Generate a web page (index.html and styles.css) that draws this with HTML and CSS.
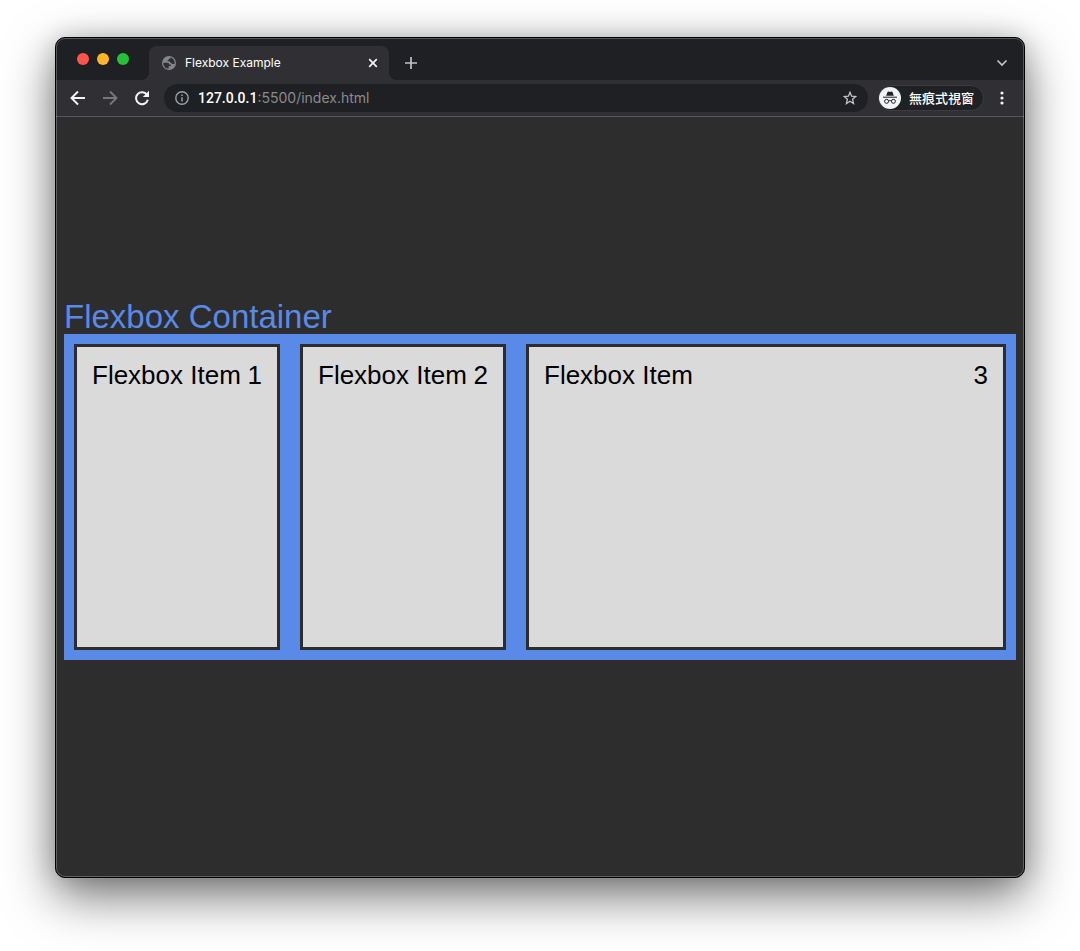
FILE: index.html
```html
<!DOCTYPE html>
<html lang="zh-Hant">
<head>
<meta charset="utf-8">
<meta name="viewport" content="width=device-width, initial-scale=1">
<title>Flexbox Example</title>
<link rel="stylesheet" href="styles.css">
</head>
<body>
<div class="window">
  <header class="tabstrip">
    <div class="lights">
      <button class="light red" aria-label="Close window"></button>
      <button class="light yellow" aria-label="Minimize window"></button>
      <button class="light green" aria-label="Zoom window"></button>
    </div>
    <div class="tab">
      <svg class="globe" width="14" height="14" viewBox="0 0 14 14" aria-hidden="true"><circle cx="7" cy="7" r="7" fill="#80868b"/><path d="M1.300 6.700h4.200c1.300 0 1.600.8 1.600 1.800h1.500c.6 0 .5 1.200 0 1.500H6.700v2.600C3.600 12.700 1.200 10 1.300 6.700zM8.300 1.500c.2 1-.5 1.400-1.200 1.500-.3 1.300-1.600.8-1.600 1.700 0 .7 1.600.4 2.300.9.700.6.500 1.600 1.500 1.600.9 0 .8.900 1.500.9h1.800C13 4.600 11.200 2 8.300 1.500z" fill="#303034"/></svg>
      <span class="tab-title">Flexbox Example</span>
      <button class="icon-button small" aria-label="Close tab"><svg width="10" height="10" viewBox="0 0 10 10"><path d="M1.200 1.200l7.600 7.600M8.800 1.200L1.200 8.800" stroke="#f1f3f4" stroke-width="1.700"/></svg></button>
    </div>
    <button class="icon-button new-tab" aria-label="New tab"><svg width="12" height="12" viewBox="0 0 12 12"><path d="M6 0v12M0 6h12" stroke="#c0c3c8" stroke-width="1.700"/></svg></button>
    <button class="icon-button search-tabs" aria-label="Search tabs"><svg width="12" height="12" viewBox="0 0 12 12"><path d="M1.500 3.500L6 8l4.500-4.500" fill="none" stroke="#c0c3c8" stroke-width="1.700"/></svg></button>
  </header>
  <nav class="toolbar">
    <button class="icon-button" aria-label="Back"><svg width="20" height="20" viewBox="0 0 20 20"><path d="M17 10H4M10 3.500L3.500 10l6.500 6.500" fill="none" stroke="#f1f3f4" stroke-width="1.900"/></svg></button>
    <button class="icon-button" aria-label="Forward"><svg width="20" height="20" viewBox="0 0 20 20"><path d="M3 10h13M10 3.500l6.500 6.500-6.500 6.500" fill="none" stroke="#77777b" stroke-width="1.900"/></svg></button>
    <button class="icon-button" aria-label="Reload"><svg width="20" height="20" viewBox="0 0 20 20"><path d="M15.200 7.200A6 6 0 1 0 15.800 11.800" fill="none" stroke="#f1f3f4" stroke-width="2"/><path d="M17 2.800V9h-6.200z" fill="#f1f3f4"/></svg></button>
    <div class="address">
      <svg width="14" height="14" viewBox="0 0 14 14" aria-hidden="true"><circle cx="7" cy="7" r="6.200" fill="none" stroke="#9aa0a6" stroke-width="1.400"/><path d="M7 6.200v4.300M7 3.500v1.500" stroke="#9aa0a6" stroke-width="1.500"/></svg>
      <span class="url"><b>127.0.0.1</b>:5500/index.html</span>
      <button class="icon-button star" aria-label="Bookmark this page"><svg width="14" height="14" viewBox="0 0 14 14"><path d="M7 1.300l1.600 3.900 4.200.3-3.200 2.800 1 4.200L7 10.200l-3.600 2.300 1-4.200L1.200 5.500l4.200-.3z" fill="none" stroke="#c0c3c8" stroke-width="1.300"/></svg></button>
    </div>
    <div class="incognito">
      <svg width="22" height="22" viewBox="0 0 22 22" aria-hidden="true"><circle cx="11" cy="11" r="11" fill="#f1f3f4"/><path d="M7.200 8.800l1.200-3.600c.2-.6.700-.8 1.200-.6l1.400.4 1.400-.4c.5-.2 1 0 1.200.6l1.200 3.600z" fill="#202124"/><path d="M4 10.200h14M9.600 14c.9-.6 1.900-.6 2.800 0" fill="none" stroke="#202124" stroke-width="1"/><circle cx="7.600" cy="14.300" r="2" fill="none" stroke="#202124"/><circle cx="14.400" cy="14.300" r="2" fill="none" stroke="#202124"/></svg>
      <span>無痕式視窗</span>
    </div>
    <button class="icon-button" aria-label="Menu"><svg width="4" height="14" viewBox="0 0 4 14"><g fill="#f1f3f4"><circle cx="2" cy="2" r="1.600"/><circle cx="2" cy="7" r="1.600"/><circle cx="2" cy="12" r="1.600"/></g></svg></button>
  </nav>
  <main class="page">
    <h1 class="title">Flexbox Container</h1>
    <div class="container">
      <div class="item"><span>Flexbox Item</span><span>1</span></div>
      <div class="item"><span>Flexbox Item</span><span>2</span></div>
      <div class="item grow"><span>Flexbox Item</span><span>3</span></div>
    </div>
  </main>
</div>
</body>
</html>
```
FILE: styles.css
```css
* {
  box-sizing: border-box;
}

body {
  display: flex;
  min-height: 100vh;
  margin: 0;
  padding: 37px 55px 73px;
  background: #fff;
  font-family: "Liberation Sans", "Noto Sans CJK TC", sans-serif;
}

.window {
  display: flex;
  flex: 1;
  flex-direction: column;
  min-width: 0;
  overflow: hidden;
  border: 1px solid #000;
  border-radius: 10px;
  background: #2d2d2d;
  box-shadow: 0 18px 50px rgba(0, 0, 0, 0.55), 0 0 24px rgba(0, 0, 0, 0.16);
  position: relative;
}

.window::after {
  content: "";
  position: absolute;
  inset: 0;
  border: 1px solid rgba(255, 255, 255, 0.25);
  border-radius: 9px;
  pointer-events: none;
}

.tabstrip {
  display: flex;
  align-items: flex-end;
  height: 42px;
  background: #1f2024;
}

.lights {
  display: flex;
  align-self: center;
  gap: 8px;
  width: 93px;
  padding-left: 21px;
}

.light {
  width: 12px;
  height: 12px;
  padding: 0;
  border: 0;
  border-radius: 50%;
}

.red {
  background: #ff544d;
}

.yellow {
  background: #ffb429;
}

.green {
  background: #25c138;
}

.tab {
  position: relative;
  display: flex;
  align-items: center;
  gap: 9px;
  width: 240px;
  height: 34px;
  padding: 0 8px 0 13px;
  border-radius: 8px 8px 0 0;
  background: #303034;
  color: #fff;
  font: 12px/16px Inter, sans-serif;
}

.tab::before,
.tab::after {
  content: "";
  position: absolute;
  bottom: 0;
  width: 8px;
  height: 8px;
}

.tab::before {
  right: 100%;
  background: radial-gradient(circle at 0 0, transparent 8px, #303034 8px);
}

.tab::after {
  left: 100%;
  background: radial-gradient(circle at 100% 0, transparent 8px, #303034 8px);
}

.tab-title {
  flex: 1;
}

.icon-button {
  display: flex;
  align-items: center;
  justify-content: center;
  width: 20px;
  height: 20px;
  padding: 0;
  border: 0;
  background: none;
}

.small {
  width: 16px;
  height: 16px;
}

.new-tab,
.search-tabs {
  height: 34px;
}

.new-tab {
  margin-left: 12px;
}

.search-tabs {
  margin-right: 12px;
  margin-left: auto;
}

.toolbar {
  display: flex;
  align-items: center;
  gap: 12px;
  height: 37px;
  padding: 0 12px;
  border-bottom: 1px solid #56565a;
  background: #303034;
}

.address {
  display: flex;
  flex: 1;
  align-items: center;
  gap: 9px;
  height: 28px;
  padding: 0 8px 0 11px;
  border-radius: 14px;
  background: #1f2024;
  font: 14px/20px Inter, sans-serif;
}

.url {
  flex: 1;
  color: #8a8b8e;
}

.url b {
  color: #fff;
  font-family: Roboto, sans-serif;
  font-weight: 500;
}

.incognito {
  display: flex;
  align-items: center;
  gap: 8px;
  height: 26px;
  margin-right: -4px;
  margin-left: -2px;
  padding-right: 9px;
  border: 1px solid #3c3c40;
  border-radius: 13px;
  background: #202124;
  color: #fff;
  font: 500 13px/20px "Noto Sans CJK TC", sans-serif;
}

.page {
  display: grid;
  flex: 1;
  grid-template-rows: 1fr auto 1fr;
  padding: 0 8px;
}

.title {
  align-self: end;
  margin: 0;
  color: #5a8ae8;
  font-size: 33px;
  font-weight: 400;
  line-height: 34px;
}

.container {
  display: flex;
  gap: 20px;
  padding: 10px;
  background: #5a8ae8;
}

.item {
  display: flex;
  flex: 0 0 206px;
  justify-content: space-between;
  min-height: 306px;
  padding: 12px 15px;
  border: 3px solid #2d2d2d;
  background: #dadada;
  color: #000;
  font-size: 26px;
  line-height: 32px;
}

.grow {
  flex: 1;
}
```
